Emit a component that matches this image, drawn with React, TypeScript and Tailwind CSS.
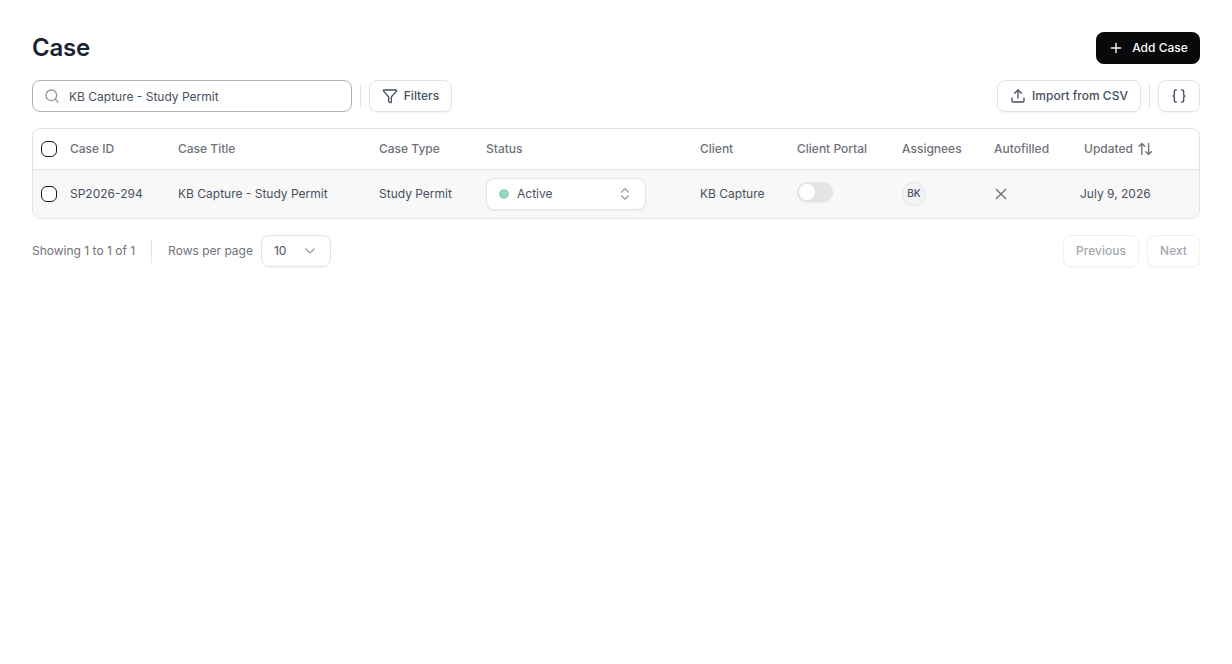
import React from 'react';
import { Braces, ChevronDown, ChevronsUpDown, Funnel, Plus, Search, Upload } from 'lucide-react';
import clsx from 'clsx';

interface CaseRecord {
    id: string;
    title: string;
    type: string;
    status: string;
    client: string;
    clientPortal: boolean;
    assignee: string;
    updated: string;
}

const cases: CaseRecord[] = [
    {
        id: 'SP2026-294',
        title: 'KB Capture - Study Permit',
        type: 'Study Permit',
        status: 'Active',
        client: 'KB Capture',
        clientPortal: false,
        assignee: 'BK',
        updated: 'July 9, 2026',
    },
];

const columns = [
    { label: 'Case ID', width: 'w-[108px]' },
    { label: 'Case Title', width: 'w-[201px]' },
    { label: 'Case Type', width: 'w-[107px]' },
    { label: 'Status', width: 'w-[214px]' },
    { label: 'Client', width: 'w-[97px]' },
    { label: 'Client Portal', width: 'w-[105px]' },
    { label: 'Assignees', width: 'w-[92px]' },
    { label: 'Autofilled', width: 'w-[86px]' },
];

const SortIcon = () => (
    <svg viewBox="0 0 16 16" className="size-4" fill="none" stroke="currentColor" strokeWidth="1.4" strokeLinecap="round" strokeLinejoin="round">
        <path d="M4.8 13.5V2.5M2 5.3l2.8-2.8 2.8 2.8M11.6 2.5v11M8.8 10.7l2.8 2.8 2.8-2.8" />
    </svg>
);

const CrossIcon = () => (
    <svg viewBox="0 0 14 14" className="size-3.5 text-[#71717a]" fill="none" stroke="currentColor" strokeWidth="1.4" strokeLinecap="round">
        <path d="M2.4 2.4l9.2 9.2M11.6 2.4l-9.2 9.2" />
    </svg>
);

const Button: React.FC<React.ButtonHTMLAttributes<HTMLButtonElement>> = ({ className, children, ...props }) => (
    <button
        type="button"
        className={clsx('flex h-8 items-center justify-center rounded-lg border border-[#e4e4e7] bg-white font-medium text-[#475060] shadow-xs disabled:opacity-50', className)}
        {...props}
    >
        {children}
    </button>
);

const Checkbox = ({ label }: { label: string }) => (
    <button type="button" role="checkbox" aria-checked="false" aria-label={label} className="block size-4 rounded-md border border-[#18181b] bg-white" />
);

export default function App() {
    return (
        <main className="flex min-h-screen flex-col bg-white p-8 font-['Inter',sans-serif] text-xs text-[#475060]">
            <header className="flex h-8 items-center justify-between">
                <h1 className="text-2xl font-semibold tracking-[-0.01em] text-[#1b2435]">Case</h1>
                <button type="button" className="flex h-8 w-26 items-center justify-center gap-2 rounded-lg bg-[#09090b] font-medium text-[#fafafa]">
                    <Plus className="size-4" />
                    Add Case
                </button>
            </header>

            <div className="mt-4 flex items-center justify-between">
                <div className="flex items-center gap-2">
                    <label className="flex h-8 w-80 items-center gap-[9px] rounded-lg border border-[#a9b1bc] px-[11px]">
                        <Search className="size-4 text-[#9199a5]" />
                        <input className="min-w-0 flex-1 pt-0.5 outline-none" defaultValue="KB Capture - Study Permit" />
                    </label>
                    <div className="h-6 w-px bg-[#e4e4e7]" />
                    <Button className="w-[83px] gap-1.5">
                        <Funnel className="size-4" />
                        Filters
                    </Button>
                </div>
                <div className="flex items-center gap-2">
                    <Button className="w-36 gap-1.5">
                        <Upload className="size-4" />
                        Import from CSV
                    </Button>
                    <div className="h-6 w-px bg-[#e4e4e7]" />
                    <Button className="w-[42px]" aria-label="Variables">
                        <Braces className="size-4" />
                    </Button>
                </div>
            </div>

            <div className="mt-4 overflow-hidden rounded-lg border border-[#e4e4e7]">
                <table className="w-full table-fixed text-left">
                    <thead>
                        <tr className="h-10 border-b border-[#e4e4e7] text-[#71717a]">
                            <th className="w-[29px] pl-2"><Checkbox label="Select all" /></th>
                            {columns.map((column) => (
                                <th key={column.label} className={clsx('px-2 font-medium', column.width)}>{column.label}</th>
                            ))}
                            <th className="w-[127px] pl-3 font-medium">
                                <span className="flex items-center gap-1">
                                    Updated
                                    <SortIcon />
                                </span>
                            </th>
                        </tr>
                    </thead>
                    <tbody>
                        {cases.map((item) => (
                            <tr key={item.id} className="h-[49px] bg-[#f8f8f8]">
                                <td className="pl-2"><Checkbox label="Select row" /></td>
                                <td className="px-2">{item.id}</td>
                                <td className="px-2">{item.title}</td>
                                <td className="px-2">{item.type}</td>
                                <td className="px-2">
                                    <button type="button" className="flex h-8 w-40 items-center rounded-lg border border-[#e4e4e7] bg-white px-3 shadow-xs">
                                        <span className="mr-2 size-2.5 rounded-full bg-[#96d5bf]" />
                                        {item.status}
                                        <ChevronsUpDown className="ml-auto size-4 text-[#a1a1aa]" />
                                    </button>
                                </td>
                                <td className="px-2">{item.client}</td>
                                <td className="px-2">
                                    <button type="button" role="switch" aria-checked={item.clientPortal} aria-label="Client portal" className="mb-1 flex h-5 w-9 items-center rounded-full bg-[#e4e4e7] p-0.5 shadow-xs">
                                        <span className="size-4 rounded-full bg-white" />
                                    </button>
                                </td>
                                <td className="px-2">
                                    <span className="flex size-6 items-center justify-center rounded-full border border-[#e4e4e7] bg-[#f4f4f5] text-[10px] font-medium">{item.assignee}</span>
                                </td>
                                <td className="px-2"><CrossIcon /></td>
                                <td className="px-2">{item.updated}</td>
                            </tr>
                        ))}
                    </tbody>
                </table>
            </div>

            <footer className="mt-4 flex items-center justify-between text-[#71717a]">
                <div className="flex items-center">
                    <span>Showing 1 to 1 of 1</span>
                    <div className="mx-4 h-6 w-px bg-[#e4e4e7]" />
                    <span>Rows per page</span>
                    <button type="button" className="ml-2 flex h-8 w-[70px] items-center justify-between rounded-lg border border-[#e4e4e7] px-3 text-[#475060] shadow-xs">
                        10
                        <ChevronDown className="size-4 text-[#a1a1aa]" />
                    </button>
                </div>
                <div className="flex gap-2">
                    <Button disabled className="w-[76px]">Previous</Button>
                    <Button disabled className="w-[53px]">Next</Button>
                </div>
            </footer>
        </main>
    );
}
